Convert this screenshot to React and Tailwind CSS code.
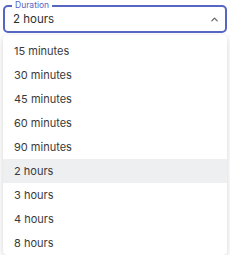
import React from "react";

const options = ["15 minutes","30 minutes","45 minutes","60 minutes","90 minutes","2 hours","3 hours","4 hours","8 hours"];

export default function App() {
  return (
    <div className="w-[230px] h-[255px] overflow-hidden bg-white" style={{fontFamily: "Inter, 'Noto Sans', sans-serif"}}>
      <div className="relative mx-[3px] mt-[5px] h-[28px] rounded-[5px] border-2 border-[#5566c3] flex items-center pl-[8px] pr-[6px] pt-[2px]">
        <span className="absolute left-[7px] -top-[7px] bg-white px-[3px] text-[8.5px] leading-[10px] text-[#5566c3]">Duration</span>
        <span className="flex-1 text-[11.5px] text-[#2f2f2f]">2 hours</span>
        <svg width="9" height="9" viewBox="0 0 10 10" className="-mt-[2px]">
          <path d="M2 6.5 L5 3.5 L8 6.5" fill="none" stroke="#666" strokeWidth="1.4" strokeLinecap="round" strokeLinejoin="round"/>
        </svg>
      </div>
      <div className="mx-[3px] mt-[2px] rounded-[4px] bg-white pt-[4px] shadow-[0_2px_6px_rgba(0,0,0,0.18)]">
        {options.map((o) => (
          <div key={o} className={"h-[24px] flex items-center pl-[11px] text-[11px] text-[#3a3a3a] " + (o === "2 hours" ? "bg-[#eeeff1]" : "")}>
            {o}
          </div>
        ))}
      </div>
    </div>
  );
}
